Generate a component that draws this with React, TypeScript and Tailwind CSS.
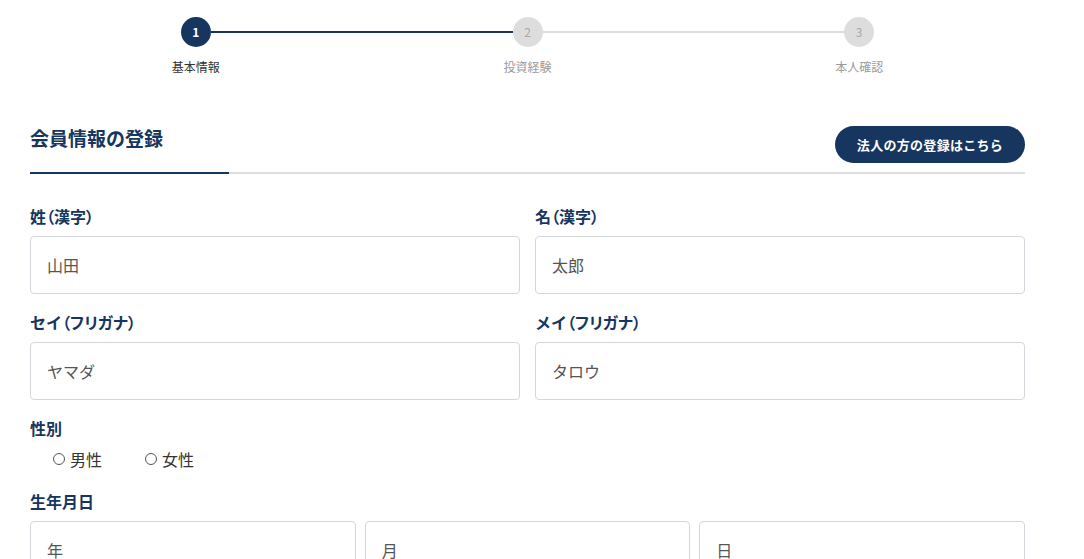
import React from "react";

const NAVY = "#17365f";

const steps = [
  { no: 1, label: "基本情報" },
  { no: 2, label: "投資経験" },
  { no: 3, label: "本人確認" },
];

// current step (1-based)
const current = 1;

const Stepper = () => {
  return (
    <div className="grid grid-cols-3 pt-[17px]">
      {steps.map((step, i) => {
        const done = step.no <= current;
        const leftActive = step.no <= current + 1;
        const rightActive = step.no <= current;
        return (
          <div key={step.no} className="flex flex-col items-center">
            <div className="flex w-full items-center">
              <div
                className={
                  i === 0
                    ? "h-[2px] flex-1"
                    : leftActive
                    ? "h-[2px] flex-1 bg-[#17365f]"
                    : "h-[2px] flex-1 bg-[#dddddd]"
                }
              />
              <div
                className={
                  done
                    ? "flex h-[30px] w-[30px] items-center justify-center rounded-full bg-[#17365f] text-[12px] font-bold text-white"
                    : "flex h-[30px] w-[30px] items-center justify-center rounded-full bg-[#dddddd] text-[12px] text-[#a8a8a8]"
                }
              >
                {step.no}
              </div>
              <div
                className={
                  i === steps.length - 1
                    ? "h-[2px] flex-1"
                    : rightActive
                    ? "h-[2px] flex-1 bg-[#17365f]"
                    : "h-[2px] flex-1 bg-[#dddddd]"
                }
              />
            </div>
            <p
              className={
                done
                  ? "mt-[11px] text-[12px] leading-[17px] text-[#333333]"
                  : "mt-[11px] text-[12px] leading-[17px] text-[#9a9a9a]"
              }
            >
              {step.label}
            </p>
          </div>
        );
      })}
    </div>
  );
};

const Label = ({ main, note }: { main: string; note?: string }) => (
  <label className="block text-[16px] font-bold leading-[22px] text-[#17365f]">
    {main}
    {note && (
      <span style={{ fontFeatureSettings: '"palt"' }}>
        （{note}）
      </span>
    )}
  </label>
);

const Field = ({ main, note, value }: { main: string; note?: string; value: string }) => (
  <div className="flex flex-col">
    <Label main={main} note={note} />
    <div className="mt-[9px] flex h-[58px] items-center rounded-[4px] border border-[#d3d7db] bg-white pl-[16px] text-[16px] text-[#555555]">
      {value}
    </div>
  </div>
);

const Radio = ({ label }: { label: string }) => (
  <label className="flex items-center gap-[5px] text-[16px] leading-[22px] text-[#333333]">
    <span className="h-[12px] w-[12px] rounded-full border border-[#555555]" />
    {label}
  </label>
);

export default function App() {
  return (
    <div
      className="min-h-screen bg-white"
      style={{ fontFamily: '"Noto Sans CJK JP", "Noto Sans", sans-serif' }}
    >
      <div className="ml-[30px] w-[995px]">
        <Stepper />

        {/* section header */}
        <div className="mt-[50px] flex items-end justify-between border-b-2 border-[#dddddd]">
          <h2
            className="-mb-[2px] w-[199px] border-b-2 pb-[21px] text-[19px] font-bold leading-[26px] text-[#17365f]"
            style={{ borderColor: NAVY }}
          >
            会員情報の登録
          </h2>
          <button className="mb-[9px] h-[37px] w-[190px] rounded-full bg-[#17365f] text-[13px] font-bold tracking-[0.3px] text-white">
            法人の方の登録はこちら
          </button>
        </div>

        <div className="mt-[31px] grid grid-cols-2 gap-x-[15px] gap-y-[17px]">
          <Field main="姓" note="漢字" value="山田" />
          <Field main="名" note="漢字" value="太郎" />
          <Field main="セイ" note="フリガナ" value="ヤマダ" />
          <Field main="メイ" note="フリガナ" value="タロウ" />
        </div>

        <div className="mt-[17px]">
          <Label main="性別" />
          <div className="mt-[9px] flex gap-[43px] pl-[23px]">
            <Radio label="男性" />
            <Radio label="女性" />
          </div>
        </div>

        <div className="mt-[20px]">
          <Label main="生年月日" />
          <div className="mt-[9px] grid grid-cols-3 gap-[9px]">
            {["年", "月", "日"].map((v) => (
              <div
                key={v}
                className="flex h-[58px] items-center rounded-[4px] border border-[#d3d7db] pl-[16px] text-[16px] text-[#555555]"
              >
                {v}
              </div>
            ))}
          </div>
        </div>
      </div>
    </div>
  );
}
